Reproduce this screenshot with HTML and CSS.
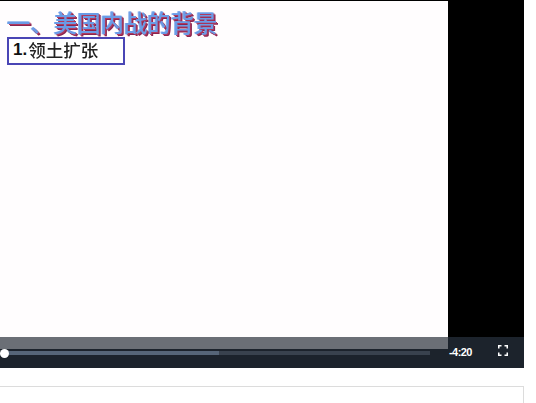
FILE: index.html
```html
<!DOCTYPE html>
<html lang="zh">
<head>
<meta charset="utf-8">
<title>美国内战的背景</title>
<link rel="stylesheet" href="styles.css">
</head>
<body>
<div class="player">
  <div class="video">
    <div class="slide">
      <h1 class="title">一、美国内战的背景</h1>
      <div class="point"><b class="num">1.</b><span class="label">领土扩张</span></div>
    </div>
  </div>
  <div class="controls">
    <div class="seek">
      <div class="track"><div class="buffered"></div></div>
      <div class="knob"></div>
    </div>
    <span class="time">-4:20</span>
    <button class="fs" aria-label="全屏">
      <svg width="10" height="11" viewBox="0 0 10 11"><path d="M.75 3.5V.75H3.5M6.5.75H9.25V3.5M9.25 7.5V10.25H6.5M3.5 10.25H.75V7.5" fill="none" stroke="#fff" stroke-width="1.5"/></svg>
    </button>
  </div>
</div>
<div class="card"></div>
</body>
</html>
```
FILE: styles.css
```css
html, body { margin: 0; padding: 0; background: #fff; overflow: hidden; }
body { width: 536px; height: 403px; font-family: "Liberation Sans", "Noto Sans CJK SC", sans-serif; }
.player { position: relative; width: 524px; height: 368px; background: #000; padding-top: 1px; box-sizing: border-box; }
.video { height: 348px; }
.slide { width: 447.5px; height: 348px; background: #fffdfe; box-sizing: border-box; padding: 7px 0 0 7px; }
.title {
  margin: 0; height: 29px; font: 500 23.4px/29px "Noto Sans CJK SC", sans-serif; white-space: nowrap;
  color: #6a9be6; filter: blur(.35px);
  text-shadow: 1px 1px 0 #b03a5e, 2px 2px 0 #8a2450, -1px 0 0 #8db4ee;
}
.point {
  width: 118px; height: 28px; box-sizing: border-box; border: 2px solid #4a45b5; background: #fff;
  display: flex; align-items: center; padding-left: 4px; color: #222;
}
.num { font: 700 17px/24px "Liberation Sans", sans-serif; color: #111; margin-top: -2px; }
.label { font: 500 17.5px/24px "Noto Sans CJK SC", sans-serif; margin-top: -3px; margin-left: 1px; filter: blur(.3px); }
.controls {
  position: absolute; left: 0; right: 0; top: 337px; height: 31px;
  background: rgba(28, 35, 44, .65); display: flex; align-items: center; color: #fff;
}
.controls::after { content: ""; position: absolute; left: 0; right: 0; top: 12px; bottom: 0; background: #1c232c; z-index: 0; }
.controls::before { content: ""; position: absolute; left: 447.5px; right: 0; top: 0; height: 12px; background: #1c232c; z-index: 0; }
.seek { position: relative; z-index: 1; width: 430px; height: 8px; flex: none; display: flex; align-items: center; }
.track { width: 426px; height: 4px; margin-left: 4px; background: #39424e; }
.buffered { width: 215px; height: 4px; background: #566578; }
.knob { position: absolute; left: 0; top: 0; width: 9px; height: 9px; border-radius: 50%; background: #fff; }
.time { position: relative; z-index: 1; margin-left: 19px; width: 24px; font-size: 11px; font-weight: 700; line-height: 31px; letter-spacing: -.55px; }
.fs { position: relative; z-index: 1; margin-left: 25px; padding: 0; border: 0; background: none; width: 10px; height: 11px; display: flex; margin-top: -4px; }
.card { margin-top: 17.5px; width: 524px; height: 30px; box-sizing: border-box; border: 1px solid #dcdcdc; border-left: 0; border-bottom: 0; }
```
